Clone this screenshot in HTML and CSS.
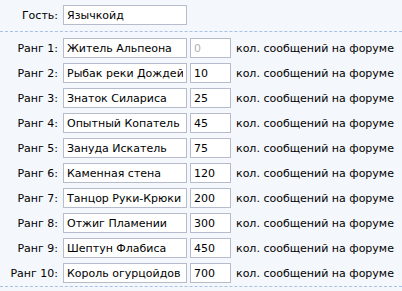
FILE: index.html
```html
<!DOCTYPE html>
<html lang="ru">
<head>
    <meta charset="UTF-8">
    <title>Ранги</title>
    <link rel="stylesheet" href="styles.css">
</head>
<body>
    <div class="guest">
        <div class="row">
            <label class="lbl">Гость:</label>
            <input class="name" type="text" value="Язычкойд">
        </div>
    </div>
    <div class="ranks">
        <div class="row"><label class="lbl">Ранг 1:</label><input class="name" type="text" value="Житель Альпеона"><input class="count" type="text" placeholder="0"><span class="hint">кол. сообщений на форуме</span></div>
        <div class="row"><label class="lbl">Ранг 2:</label><input class="name" type="text" value="Рыбак реки Дождей"><input class="count" type="text" value="10"><span class="hint">кол. сообщений на форуме</span></div>
        <div class="row"><label class="lbl">Ранг 3:</label><input class="name" type="text" value="Знаток Силариса"><input class="count" type="text" value="25"><span class="hint">кол. сообщений на форуме</span></div>
        <div class="row"><label class="lbl">Ранг 4:</label><input class="name" type="text" value="Опытный Копатель"><input class="count" type="text" value="45"><span class="hint">кол. сообщений на форуме</span></div>
        <div class="row"><label class="lbl">Ранг 5:</label><input class="name" type="text" value="Зануда Искатель"><input class="count" type="text" value="75"><span class="hint">кол. сообщений на форуме</span></div>
        <div class="row"><label class="lbl">Ранг 6:</label><input class="name" type="text" value="Каменная стена"><input class="count" type="text" value="120"><span class="hint">кол. сообщений на форуме</span></div>
        <div class="row"><label class="lbl">Ранг 7:</label><input class="name" type="text" value="Танцор Руки-Крюки"><input class="count" type="text" value="200"><span class="hint">кол. сообщений на форуме</span></div>
        <div class="row"><label class="lbl">Ранг 8:</label><input class="name" type="text" value="Отжиг Пламении"><input class="count" type="text" value="300"><span class="hint">кол. сообщений на форуме</span></div>
        <div class="row"><label class="lbl">Ранг 9:</label><input class="name" type="text" value="Шептун Флабиса"><input class="count" type="text" value="450"><span class="hint">кол. сообщений на форуме</span></div>
        <div class="row"><label class="lbl">Ранг 10:</label><input class="name" type="text" value="Король огурцойдов"><input class="count" type="text" value="700"><span class="hint">кол. сообщений на форуме</span></div>
    </div>
</body>
</html>
```

FILE: styles.css
```css
body {
    margin: 0;
    background: #f4f7fc;
    font-family: "DejaVu Sans", Tahoma, sans-serif;
    font-size: 11px;
    color: #000;
}
.guest {
    padding-top: 5px;
    height: 26px;
    border-bottom: 1px dashed #a9c1e3;
}
.ranks {
    padding: 6px 0 3px;
    display: flex;
    flex-direction: column;
    gap: 5px;
    border-bottom: 1px dashed #a9c1e3;
}
.row {
    display: flex;
    align-items: center;
    height: 20px;
}
.lbl {
    width: 58px;
    margin-right: 5px;
    text-align: right;
    white-space: nowrap;
}
input {
    box-sizing: border-box;
    height: 20px;
    margin: 0;
    padding: 1px 3px 0;
    border: 1px solid #b7bccd;
    background: #fff;
    font-family: inherit;
    font-size: 11px;
    color: #000;
    outline: none;
}
input::placeholder {
    color: #b0b0b0;
}
.name {
    width: 124px;
}
.count {
    width: 41px;
    margin-left: 3px;
}
.hint {
    margin-left: 5px;
    white-space: nowrap;
}
```
